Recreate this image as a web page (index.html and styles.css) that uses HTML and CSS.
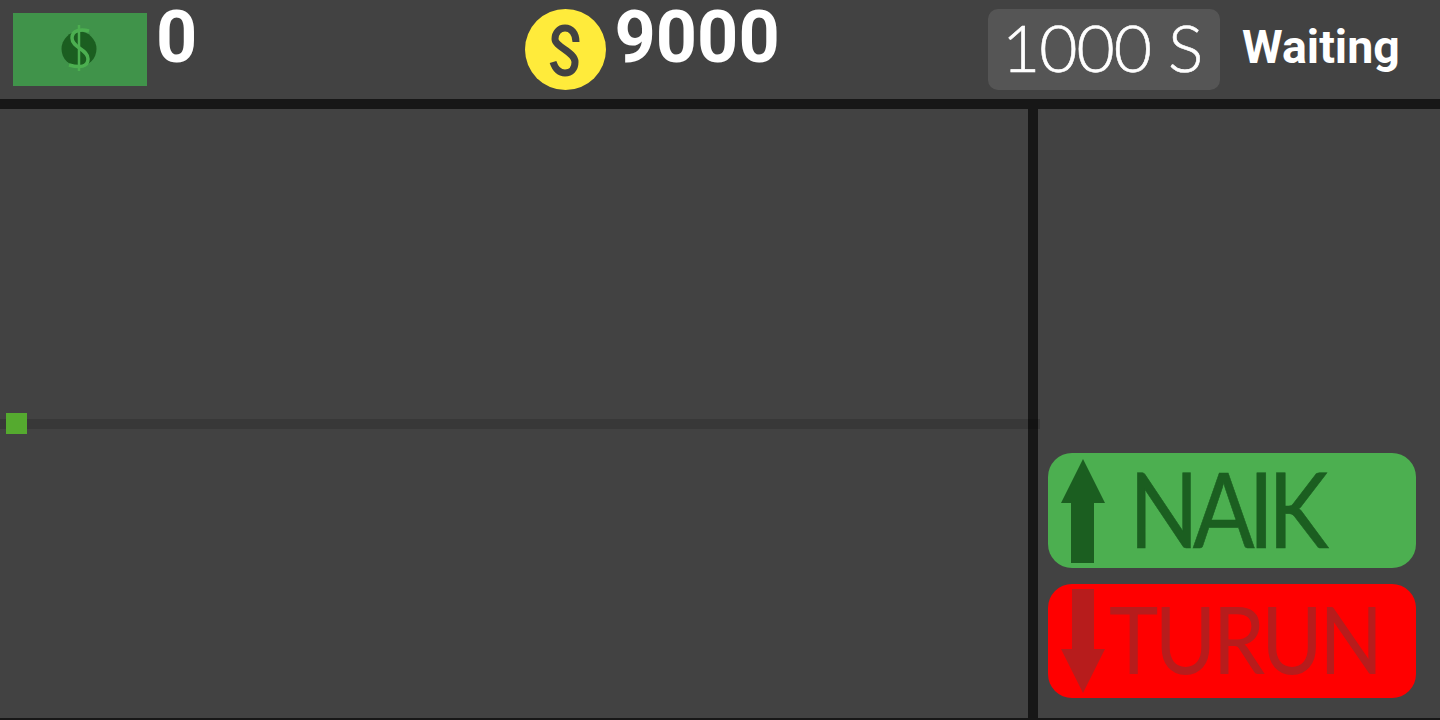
FILE: index.html
```html
<!DOCTYPE html>
<html lang="en">
<head>
  <meta charset="UTF-8">
  <meta name="viewport" content="width=device-width, initial-scale=1.0">
  <title>Trading Game</title>
  <link rel="stylesheet" href="styles.css">
</head>
<body>

  <header class="top-bar">
    <div class="stat stat-money">
      <svg class="bill-icon" viewBox="0 0 134 73" aria-hidden="true">
        <rect width="134" height="73" fill="#40934a"/>
        <circle cx="66" cy="36" r="17.5" fill="#1b5e20"/>
        <path d="M66 12V58" fill="none" stroke="#4caf50" stroke-width="2.5"/>
        <path d="M76 18C68 16 59 17 59 25C59 35 75 36 75 46C75 54 67 55 56 52" fill="none" stroke="#4caf50" stroke-width="3.5"/>
      </svg>
      <span class="stat-value">0</span>
    </div>
    <div class="stat stat-coins">
      <svg class="coin-icon" viewBox="0 0 81 81" aria-hidden="true">
        <circle cx="40.5" cy="40.5" r="40.5" fill="#ffeb3b"/>
        <path d="M51 33C51 24 46 19 40 19C34 19 30 24 30 30C30 38 50 43 50 53C50 60 46 64 40 64C34 64 30 59 28 53" fill="none" stroke="#424242" stroke-width="7"/>
      </svg>
      <span class="stat-value">9000</span>
    </div>
    <div class="stat stat-round">
      <div class="timer">1000 S</div>
      <span class="round-status">Waiting</span>
    </div>
  </header>

  <main class="game">
    <div class="chart">
      <div class="chart-line"></div>
      <div class="chart-point"></div>
    </div>
    <div class="controls">
      <button class="bet-button bet-up">
        <svg class="bet-arrow" viewBox="0 0 44 104" aria-hidden="true">
          <path d="M22 0L44 44H33V104H10V44H0Z" fill="#1b5e20"/>
        </svg>
        <span class="bet-label">NAIK</span>
      </button>
      <button class="bet-button bet-down">
        <svg class="bet-arrow" viewBox="0 0 44 104" aria-hidden="true">
          <path d="M22 104L44 60H33V0H11V60H0Z" fill="#b71c1c"/>
        </svg>
        <span class="bet-label">TURUN</span>
      </button>
    </div>
  </main>

</body>
</html>
```

FILE: styles.css
```css
body {
  margin: 0;
  font-family: Roboto, Arial, sans-serif;
  background-color: #424242;
  color: #fff;
  height: 720px;
  overflow: hidden;
}

.top-bar {
  display: grid;
  grid-template-columns: 524.5px 463.5px 1fr;
  height: 99px;
  border-bottom: 10px solid #171717;
}

.stat {
  display: flex;
  align-items: flex-start;
}

.stat-value {
  font-size: 72px;
  font-weight: 700;
  line-height: 74px;
}

.stat-money {
  padding: 13px 0 0 13px;
}

.stat-money .stat-value {
  margin: -12px 0 0 9px;
}

.bill-icon {
  width: 134px;
  height: 73px;
}

.stat-coins {
  padding-top: 9px;
}

.stat-coins .stat-value {
  margin: -8px 0 0 9px;
}

.coin-icon {
  width: 81px;
  height: 81px;
}

.stat-round {
  padding-top: 9px;
}

.timer {
  box-sizing: border-box;
  width: 232px;
  height: 81px;
  padding-left: 14px;
  background-color: #555;
  border-radius: 10px;
  font-family: Lato, sans-serif;
  font-size: 66px;
  font-weight: 300;
  line-height: 76px;
  letter-spacing: -1px;
  white-space: nowrap;
  -webkit-text-stroke: 0.6px #fff;
}

.round-status {
  margin: 13px 0 0 22px;
  font-size: 46.5px;
  font-weight: 700;
  line-height: 50px;
}

.game {
  display: flex;
  height: 609px;
  border-bottom: 2px solid #171717;
}

.chart {
  position: relative;
  width: 1028px;
  border-right: 10px solid #171717;
}

.chart-line {
  position: absolute;
  top: 310px;
  left: 0;
  width: 1040px;
  height: 10px;
  background-color: rgba(0, 0, 0, 0.15);
}

.chart-point {
  position: absolute;
  top: 304.4px;
  left: 5.5px;
  width: 21px;
  height: 21px;
  background-color: #55aa2f;
}

.controls {
  flex: 1;
  display: flex;
  flex-direction: column;
  justify-content: flex-end;
  gap: 16px;
  padding: 0 24px 20px 10px;
}

.bet-button {
  display: flex;
  align-items: center;
  height: 114.5px;
  padding: 0 0 0 13px;
  border: none;
  border-radius: 24px;
  font-family: Lato, sans-serif;
  font-weight: 400;
  cursor: pointer;
}

.bet-up {
  background-color: #4caf50;
  color: #1b5e20;
}

.bet-up .bet-arrow {
  margin-top: 1px;
}

.bet-down {
  background-color: #f00;
  color: #b71c1c;
}

.bet-arrow {
  flex: none;
  width: 44px;
  height: 104px;
}

.bet-label {
  line-height: 1;
  white-space: nowrap;
  transform-origin: left center;
}

.bet-up .bet-label {
  margin: -5px 0 0 24px;
  font-size: 104px;
  letter-spacing: -7px;
  transform: scaleX(0.88);
  -webkit-text-stroke: 0.6px #1b5e20;
}

.bet-down .bet-label {
  margin: -6px 0 0 4px;
  font-size: 94px;
  letter-spacing: -4px;
  transform: scaleX(0.89);
}
```
